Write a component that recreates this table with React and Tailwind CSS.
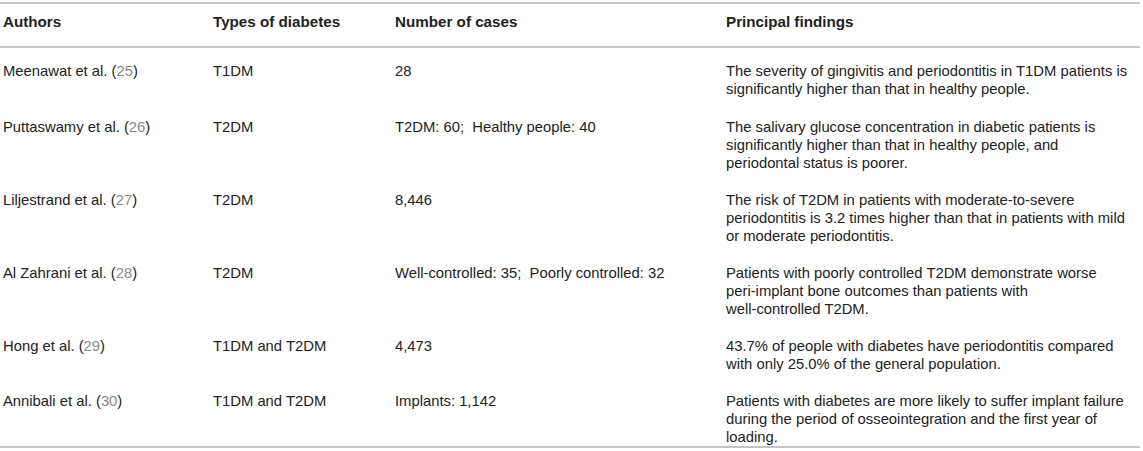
export default function App() {
  const rows = [
    { a: "Meenawat et al. (", r: "25", t: "T1DM", n: "28", f: ["The severity of gingivitis and periodontitis in T1DM patients is significantly higher than that in healthy people."] },
    { a: "Puttaswamy et al. (", r: "26", t: "T2DM", n: "T2DM: 60;\u00a0 Healthy people: 40", f: ["The salivary glucose concentration in diabetic patients is significantly higher than that in healthy people, and periodontal status is poorer."] },
    { a: "Liljestrand et al. (", r: "27", t: "T2DM", n: "8,446", f: ["The risk of T2DM in patients with moderate-to-severe periodontitis is 3.2 times higher than that in patients with mild or moderate periodontitis."] },
    { a: "Al Zahrani et al. (", r: "28", t: "T2DM", n: "Well-controlled: 35;\u00a0 Poorly controlled: 32", f: ["Patients with poorly controlled T2DM demonstrate worse peri\u2011implant bone outcomes than patients with", "well\u2011controlled T2DM."] },
    { a: "Hong et al. (", r: "29", t: "T1DM and T2DM", n: "4,473", f: ["43.7% of people with diabetes have periodontitis compared with only 25.0% of the general population."] },
    { a: "Annibali et al. (", r: "30", t: "T1DM and T2DM", n: "Implants: 1,142", f: ["Patients with diabetes are more likely to suffer implant failure during the period of osseointegration and the first year of loading."] },
  ];
  return (
    <div className="w-[1143px] h-[451px] bg-white text-[#222] text-[14.8px] leading-[18px]" style={{ fontFamily: '"Liberation Sans", Arial, sans-serif' }}>
      <div className="w-[1140px] mt-[2px] border-t-2 border-b-2 border-[#c4c4c4]">
        <div className="grid grid-cols-[210px_182px_331px_417px] border-b-2 border-[#c4c4c4] font-bold text-[15.2px] pt-[9px] pb-[15px]">
          <div className="pl-[3px]">Authors</div>
          <div className="pl-[3px]">Types of diabetes</div>
          <div className="pl-[3px]">Number of cases</div>
          <div className="pl-[3px]">Principal findings</div>
        </div>
        <div className="pt-[14px]">
          {rows.map((row, i) => (
            <div key={i} className={"grid grid-cols-[210px_182px_331px_417px] " + (i === 0 ? "pb-[20px]" : i < rows.length - 1 ? "pb-[19px]" : "pb-0")}>
              <div className="pl-[3px]">
                {row.a}
                <span className="text-[#8a8a8a]">{row.r}</span>)
              </div>
              <div className="pl-[3px]">{row.t}</div>
              <div className="pl-[3px]">{row.n}</div>
              <div className="pl-[3px] pr-[10px]">
                {row.f.map((line, j) => (
                  <div key={j}>{line}</div>
                ))}
              </div>
            </div>
          ))}
        </div>
      </div>
    </div>
  );
}
